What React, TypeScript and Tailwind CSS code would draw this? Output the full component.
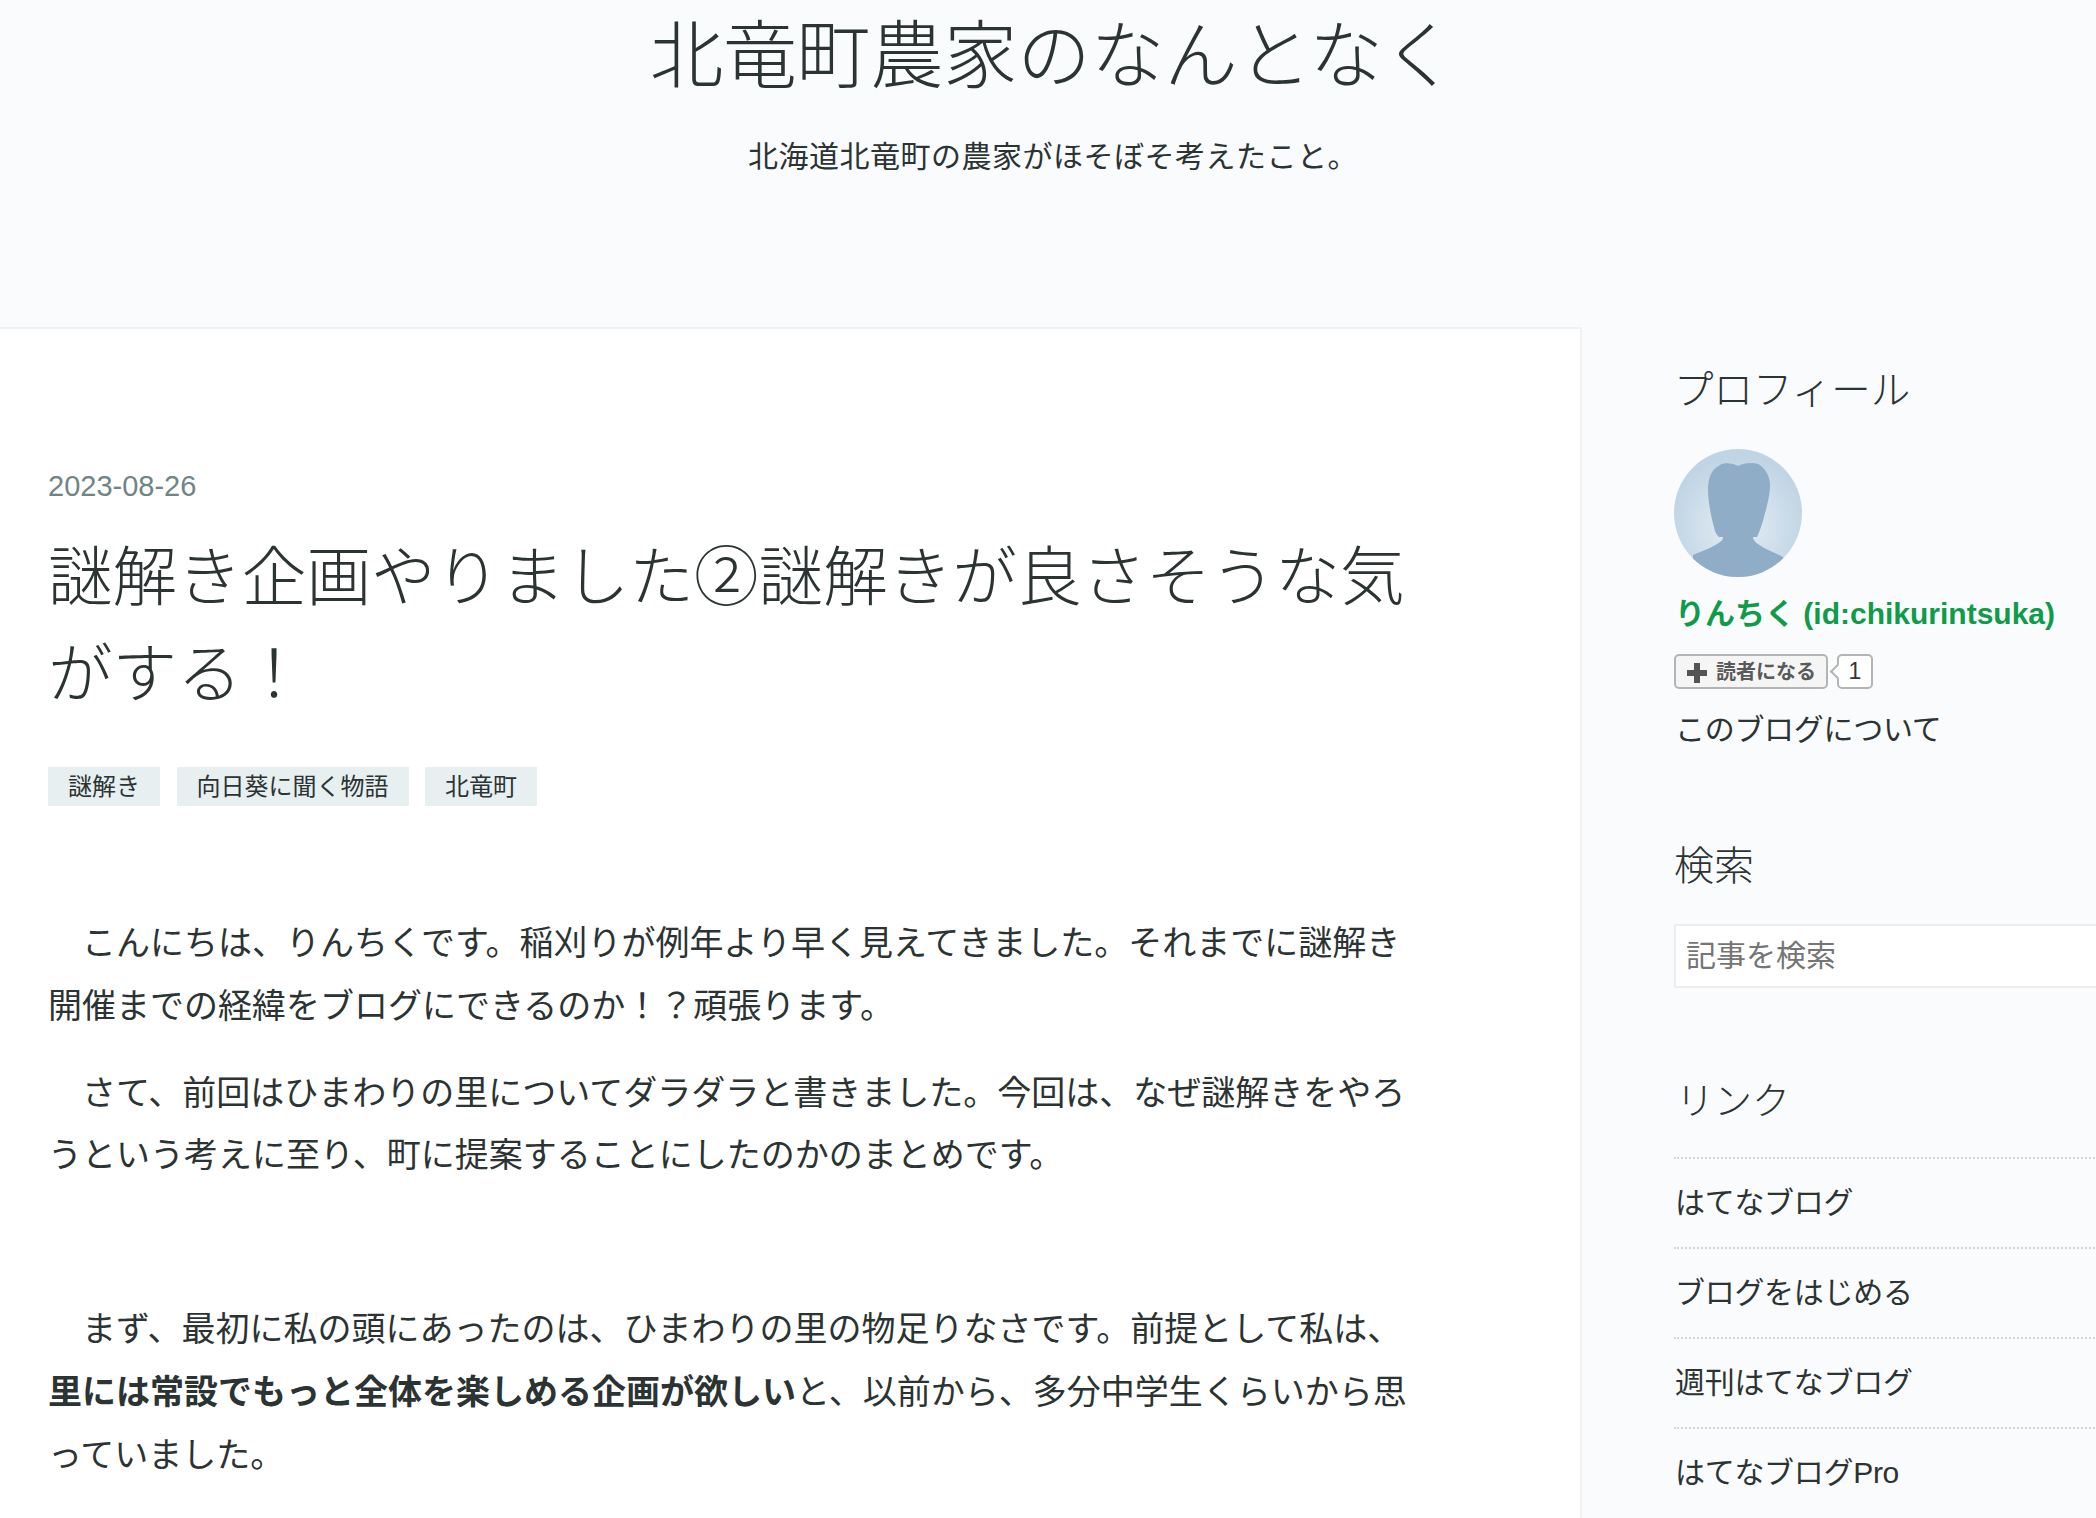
export default function App() {
  const sans = "font-['Liberation_Sans','Noto_Sans_CJK_JP',sans-serif]";
  const serif = "font-['Liberation_Serif','Noto_Sans_CJK_JP',serif]";

  return (
    <div className={`h-[1518px] w-full overflow-hidden bg-[#fafbfd] text-[#2b3333] ${sans}`}>
      {/* HEADER */}
      <header className="h-[327px] pt-[10px] pl-[10px] text-center">
        <h1 className={`text-[73.5px] leading-[96px] font-light ${serif}`}>北竜町農家のなんとなく</h1>
        <p className="mt-[27px] text-[30px] leading-[48px] tracking-[0.5px]">北海道北竜町の農家がほそぼそ考えたこと。</p>
      </header>

      <div className="flex">
        {/* ARTICLE */}
        <main className="h-[1191px] w-[1582px] shrink-0 border-t-2 border-r-2 border-[#f1f2f4] bg-white pt-[137px] pl-[48px]">
          <time className="block text-[29px] leading-[40px] text-[#6f8585]">2023-08-26</time>
          <h2 className={`mt-[24px] w-[1380px] text-[64.6px] leading-[97px] font-light ${serif}`}>
            謎解き企画やりました②謎解きが良さそうな気がする！
          </h2>

          <div className="mt-[43px] flex gap-[16.5px]">
            {["謎解き", "向日葵に聞く物語", "北竜町"].map((tag) => (
              <span key={tag} className="h-[39px] bg-[#e8eff1] px-[20px] text-[24px] leading-[39px]">
                {tag}
              </span>
            ))}
          </div>

          <div className="mt-[106px] w-[1370px] text-[34px] leading-[62.8px]">
            <p className="mb-[24px]">　こんにちは、りんちくです。稲刈りが例年より早く見えてきました。それまでに謎解き開催までの経緯をブログにできるのか！？頑張ります。</p>
            <p className="mb-[24px]">　さて、前回はひまわりの里についてダラダラと書きました。今回は、なぜ謎解きをやろうという考えに至り、町に提案することにしたのかのまとめです。</p>
            <p className="mb-[24px]"><br /></p>
            <p className="mb-[24px]">
              {"　まず、最初に私の頭にあったのは、ひまわりの里の物足りなさです。前提として私は、"}
              <strong className="font-bold">里には常設でもっと全体を楽しめる企画が欲しい</strong>
              {"と、以前から、多分中学生くらいから思っていました。"}
            </p>
          </div>
        </main>

        {/* SIDEBAR */}
        <aside className="w-[600px] shrink-0 pt-[36px] pl-[92px]">
          <section>
            <h3 className={`text-[39.5px] leading-[56px] font-light ${serif}`}>プロフィール</h3>
            <svg className="mt-[30px] h-[128px] w-[128px]" viewBox="0 0 128 128">
              <defs>
                <radialGradient id="avatarBg" cx="50%" cy="60%" r="55%">
                  <stop offset="0%" stopColor="#e6eef4" />
                  <stop offset="100%" stopColor="#bfd4e4" />
                </radialGradient>
                <clipPath id="avatarClip">
                  <circle cx="64" cy="64" r="64" />
                </clipPath>
              </defs>
              <circle cx="64" cy="64" r="64" fill="url(#avatarBg)" />
              <path
                clipPath="url(#avatarClip)"
                fill="#8fadc6"
                d="M64 17C60 14 50 13 46 16C38 20 34 28 34 40C34 52 37 68 40 78C41 84 43 86 45 88L49 88C49 90 48 92 46 93C40 98 28 102 19 106L19 128L109 128L109 108C100 103 90 100 84 95C80 92 79 90 79 88L83 88C85 84 88 76 90 68C94 54 96 44 96 36C96 26 90 18 84 15C78 13 69 14 64 17Z"
              />
            </svg>
            <a className="mt-[13px] block pl-[1px] text-[30px] leading-[48px] font-bold text-[#0f9b4a]">りんちく (id:chikurintsuka)</a>

            <div className="mt-[16px] flex items-center">
              <span className="flex h-[35px] w-[154px] items-center gap-[8px] rounded-[5px] border-2 border-[#b4b4b4] bg-[#f5f5f5] pl-[10px]">
                <svg className="mt-[2px] h-[22px] w-[22px] shrink-0" viewBox="0 0 22 22">
                  <path fill="#555" d="M8 1h6v7h7v6h-7v7H8v-7H1V8h7z" />
                </svg>
                <span className="text-[20px] leading-[30px] font-bold whitespace-nowrap text-[#5a5a5a]">読者になる</span>
              </span>
              <span className="relative ml-[9px] flex h-[35px] w-[36px] items-center justify-center rounded-[5px] border-2 border-[#b4b4b4] bg-white text-[23px] text-[#333]">
                <span className="absolute top-[10px] left-[-7px] h-[11px] w-[11px] rotate-45 border-b-2 border-l-2 border-[#b4b4b4] bg-white" />
                1
              </span>
            </div>
            <p className="mt-[17px] pl-[1px] text-[30px] leading-[48px] tracking-[-0.3px]">このブログについて</p>
          </section>

          <section className="mt-[85px]">
            <h3 className={`text-[40px] leading-[56px] font-light ${serif}`}>検索</h3>
            <input
              readOnly
              placeholder="記事を検索"
              className="mt-[29px] h-[64px] w-full border-2 border-[#ebedef] bg-white px-[10px] text-[30px] placeholder:text-[#757575]"
            />
          </section>

          <section className="mt-[85px]">
            <h3 className={`pl-[2px] text-[38px] leading-[56px] font-light ${serif}`}>リンク</h3>
            <ul className="mt-[28px]">
              {["はてなブログ", "ブログをはじめる", "週刊はてなブログ", "はてなブログPro"].map((link) => (
                <li key={link} className="h-[90px] border-t-2 border-dotted border-[#d4d6d8] pl-[1px] text-[30px] leading-[88px] tracking-[-0.3px]">
                  {link}
                </li>
              ))}
            </ul>
          </section>
        </aside>
      </div>
    </div>
  );
}
